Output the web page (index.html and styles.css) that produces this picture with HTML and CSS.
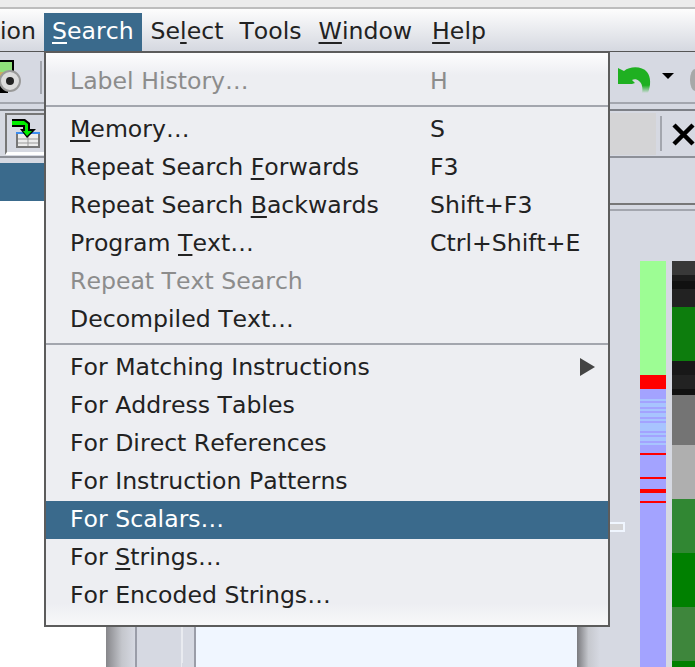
FILE: index.html
```html
<!DOCTYPE html>
<html>
<head>
<meta charset="utf-8"/>
<title>Search menu</title>
<link rel="stylesheet" href="styles.css">
</head>
<body>
<div class="titlebar"></div>

<div class="menubar">
  <span class="top cut">ion</span>
  <span class="top open"><u>S</u>earch</span>
  <span class="top select">Se<u>l</u>ect</span>
  <span class="top">Tools</span>
  <span class="top window"><u>W</u>indow</span>
  <span class="top help"><u>H</u>elp</span>
</div>

<div class="toolbar tb1">
  <svg class="ic-disc" width="24" height="34" viewBox="0 0 24 34">
    <path d="M0 0h14v20H0z" fill="#000"/>
    <path d="M0 2h12v10H0z" fill="#8fe07a"/>
    <path d="M0 12h12v4H0z" fill="#c8b060"/>
    <path d="M0 24h8v9H0z" fill="#000"/>
    <circle cx="10" cy="21" r="10" fill="#dcdcdc" stroke="#9a9a9a" stroke-width="2"/>
    <circle cx="10" cy="21" r="4" fill="#222"/>
  </svg>
  <div class="tool-sep"></div>
  <div class="grow"></div>
  <svg class="ic-undo" width="34" height="30" viewBox="0 0 34 30">
    <defs>
      <linearGradient id="fade" x1="0" y1="0" x2="0" y2="1">
        <stop offset="0.7" stop-color="#1fb021"/>
        <stop offset="1" stop-color="#d6d9e2"/>
      </linearGradient>
    </defs>
    <path d="M0 3l6 3C12 1 24 1 29 7c4 5 4 13 1 21h-6c1-5 0-10-3-12-2-2-5-2-7-1l3 3-3 1H0z" fill="url(#fade)"/>
  </svg>
  <svg class="ic-drop" width="12" height="6" viewBox="0 0 12 6"><path d="M0 0h12L6 6z" fill="#000"/></svg>
  <div class="ic-cut"></div>
</div>

<div class="toolbar tb2">
  <div class="pressed">
    <svg width="30" height="32" viewBox="0 0 30 32">
      <rect x="5" y="14" width="22" height="14" fill="#ececec" stroke="#777" stroke-width="2"/>
      <rect x="4" y="13" width="24" height="2" fill="#3b8cf0"/>
      <path d="M6 20h20M6 24h20M16 16v11" stroke="#999"/>
      <path d="M0 0H13L18 4V10H24L15 19L8 10H11V8H0z" fill="#000"/>
      <path d="M0 2H12L16 5V12H20L15 17L11 12H13V6H0z" fill="#00ee00"/>
    </svg>
  </div>
  <div class="grow"></div>
  <div class="field"></div>
  <div class="sep"></div>
  <svg class="ic-x" width="23" height="24" viewBox="0 0 23 24"><path d="M2 3l19 19M21 3L2 22" stroke="#000" stroke-width="4.5"/></svg>
</div>

<div class="lower">
  <div class="leftcol">
    <div class="bluebar"></div>
    <div class="leftpane"></div>
  </div>
  <div class="rightcol">
    <div class="tabrow"></div>
    <div class="content">
      <div class="gutter"></div>
      <div class="marks"></div>
      <div class="code"></div>
      <div class="gutter2"></div>
      <div class="markcol"><div class="mark"></div></div>
      <div class="overview">
        <i class="s g1"></i><i class="s r14"></i>
        <i class="s p10"></i><i class="s l2"></i><i class="s p2"></i><i class="s l4"></i><i class="s p2"></i><i class="s l2"></i><i class="s p2"></i><i class="s l4"></i><i class="s p2"></i><i class="s l2"></i><i class="s p2"></i><i class="s l8"></i><i class="s p2"></i><i class="s l2"></i><i class="s p2"></i><i class="s l4"></i><i class="s p2"></i><i class="s l2"></i><i class="s p8"></i>
        <i class="s r2"></i><i class="s p22"></i><i class="s r2"></i><i class="s p10"></i><i class="s r4"></i><i class="s p8"></i><i class="s r2"></i><i class="s pfill"></i>
      </div>
      <div class="entropy">
        <i class="s e1"></i><i class="s e2"></i><i class="s e3"></i><i class="s e4"></i><i class="s e5"></i>
        <i class="s e2b"></i><i class="s e4b"></i><i class="s e3b"></i>
        <i class="s e6"></i><i class="s e7"></i><i class="s e8"></i><i class="s e9"></i><i class="s e10"></i><i class="s e9b"></i>
      </div>
    </div>
  </div>
</div>

<div class="menu">
  <div class="item off"><span class="lbl">Label History…</span><span class="key">H</span></div>
  <hr>
  <div class="item"><span class="lbl"><u>M</u>emory…</span><span class="key">S</span></div>
  <div class="item"><span class="lbl">Repeat Search <u>F</u>orwards</span><span class="key">F3</span></div>
  <div class="item"><span class="lbl">Repeat Search <u>B</u>ackwards</span><span class="key">Shift+F3</span></div>
  <div class="item"><span class="lbl">Program <u>T</u>ext…</span><span class="key">Ctrl+Shift+E</span></div>
  <div class="item off"><span class="lbl">Repeat Text Search</span></div>
  <div class="item"><span class="lbl">Decompiled Text…</span></div>
  <hr>
  <div class="item"><span class="lbl">For Matching Instructions</span><span class="arrow"></span></div>
  <div class="item"><span class="lbl">For Address Tables</span></div>
  <div class="item"><span class="lbl">For Direct References</span></div>
  <div class="item"><span class="lbl">For Instruction Patterns</span></div>
  <div class="item sel"><span class="lbl">For Scalars…</span></div>
  <div class="item"><span class="lbl">For <u>S</u>trings…</span></div>
  <div class="item"><span class="lbl">For Encoded Strings…</span></div>
</div>
</body>
</html>
```

FILE: styles.css
```css
html, body {
  margin: 0;
  height: 667px;
  overflow: hidden;
}

body {
  position: relative;
  width: 695px;
  background: #d6d9e2;
  font-family: "DejaVu Sans", sans-serif;
  font-size: 23.6px;
  font-kerning: none;
  color: #222;
}

u {
  text-underline-offset: 3px;
  text-decoration-thickness: 2px;
}

.titlebar {
  height: 7px;
  background: #ececec;
  border-bottom: 2px solid #bdbdbd;
}

.menubar {
  display: flex;
  height: 42px;
  background: linear-gradient(#fdfdfd, #d5d8e0);
  border-bottom: 1px solid #555;
  line-height: 44px;
}

.top {
  padding: 0 8px;
  white-space: nowrap;
}

.select {
  margin-left: 1px;
}

.window {
  margin-left: 1px;
}

.help {
  margin-left: 4px;
}

.cut {
  width: 44px;
  box-sizing: border-box;
  padding: 0 10px 0 0;
  text-align: right;
}

.open {
  height: 38px;
  margin-top: 4px;
  background: #3a6a8c;
  color: #fff;
  line-height: 36px;
}

.toolbar {
  display: flex;
  align-items: center;
}

.grow {
  flex: 1;
}

.tb1 {
  height: 50px;
  border-bottom: 2px solid #a3a6ae;
}

.tool-sep {
  width: 2px;
  height: 33px;
  margin-left: 16px;
  background: #a3a6ae;
}

.ic-undo {
  margin-right: 10px;
  margin-top: 5px;
}

.ic-drop {
  margin-right: 16px;
  margin-top: -2px;
}

.ic-cut {
  width: 5px;
  height: 22px;
  margin-top: 6px;
  border-radius: 5px 0 0 5px / 11px 0 0 11px;
  background: #a8a8a8;
}

.tb2 {
  height: 45px;
  margin-top: 5px;
  border-top: 2px solid #7d8087;
  border-bottom: 2px solid #8d9098;
}

.pressed {
  width: 40px;
  height: 42px;
  margin-left: 5px;
  padding: 4px 0 0 5px;
  border-left: 2px solid #777;
  border-top: 2px solid #777;
  border-bottom: 3px solid #fff;
  box-sizing: border-box;
}

.field {
  width: 46px;
  height: 42px;
  margin-top: 1px;
  background: #d4d4d6;
}

.sep {
  width: 2px;
  height: 35px;
  margin: 0 10px 0 4px;
  background: #a3a6ae;
}

.lower {
  display: flex;
  height: 509px;
}

.leftcol {
  display: flex;
  flex-direction: column;
  width: 107px;
}

.bluebar {
  height: 38px;
  margin-top: 5px;
  background: #3a6a8c;
}

.leftpane {
  flex: 1;
  background: #fff;
}

.rightcol {
  flex: 1;
  display: flex;
  flex-direction: column;
}

.tabrow {
  height: 45px;
  border-bottom: 2px solid #777;
}

.content {
  flex: 1;
  display: flex;
  margin-top: 4px;
  border-top: 2px solid #a3a6ae;
}

.gutter {
  width: 29px;
  background: linear-gradient(90deg, #86868a, #c4c6cc 55%, #d6d9e2);
  border-right: 2px solid #9a9da8;
}

.marks {
  width: 44px;
  margin-right: 12px;
  border-right: 1px solid #e9ebf0;
  box-shadow: 5px 0 0 -4px #e9ebf0;
}

.code {
  width: 381px;
  border-left: 2px solid #9a9da8;
  background: #f0f6ff;
}

.gutter2 {
  width: 23px;
  background: linear-gradient(90deg, #7a7a7e, #c6c8ce 50%, #d6d9e2);
}

.markcol {
  width: 40px;
}

.mark {
  width: 22px;
  height: 6px;
  margin-top: 311px;
  border: 2px solid #f0f6ff;
  border-left: 0;
  margin-left: 1px;
  background: #d4d4d6;
}

.overview, .entropy {
  display: flex;
  flex-direction: column;
  margin-top: 50px;
}

.overview {
  width: 26px;
}

.entropy {
  width: 23px;
  margin-left: 6px;
}

.s {
  display: block;
}

.g1 { height: 114px; background: #9dfd94; }
.r14 { height: 14px; background: #ff0000; }
.r2 { height: 2px; background: #ff0000; }
.r4 { height: 4px; background: #ff0000; }
.p2 { height: 2px; background: #a3a3ff; }
.p8 { height: 8px; background: #a3a3ff; }
.p10 { height: 10px; background: #a3a3ff; }
.p22 { height: 22px; background: #a3a3ff; }
.pfill { flex: 1; background: #a3a3ff; }
.l2 { height: 2px; background: #a8c4ff; }
.l4 { height: 4px; background: #a8c4ff; }
.l8 { height: 8px; background: #a8c4ff; }

.e1 { height: 14px; background: #383838; }
.e2 { height: 6px; background: #1c1c1c; }
.e3 { height: 8px; background: #111; }
.e4 { height: 18px; background: #222; }
.e5 { height: 54px; background: #0d7d0d; }
.e2b { height: 14px; background: #181818; }
.e4b { height: 14px; background: #222; }
.e3b { height: 6px; background: #111; }
.e6 { height: 50px; background: #747474; }
.e7 { height: 54px; background: #afafaf; }
.e8 { height: 54px; background: #318733; }
.e9 { height: 54px; background: #008000; }
.e10 { height: 54px; background: #3e863c; }
.e9b { flex: 1; background: #008000; }

.menu {
  position: absolute;
  left: 44px;
  top: 51px;
  width: 566px;
  height: 576px;
  box-sizing: border-box;
  border: 2px solid #5c5c5c;
  padding-top: 10px;
  background: linear-gradient(#fdfdfd, #edeef2 22px, #edeef2 550px, #f8f8f9);
}

.menu hr {
  height: 2px;
  margin: 4px 0;
  border: 0;
  background: #a3a6ae;
}

.item {
  display: flex;
  align-items: center;
  height: 38px;
  box-sizing: border-box;
  padding: 0 0 2px 24px;
  white-space: nowrap;
}

.lbl {
  width: 360px;
}

.off {
  color: #8c8c8c;
}

.sel {
  background: #3a6a8c;
  color: #fff;
}

.arrow {
  width: 0;
  height: 0;
  margin-left: 150px;
  border-left: 15px solid #444;
  border-top: 9px solid transparent;
  border-bottom: 9px solid transparent;
}
```
